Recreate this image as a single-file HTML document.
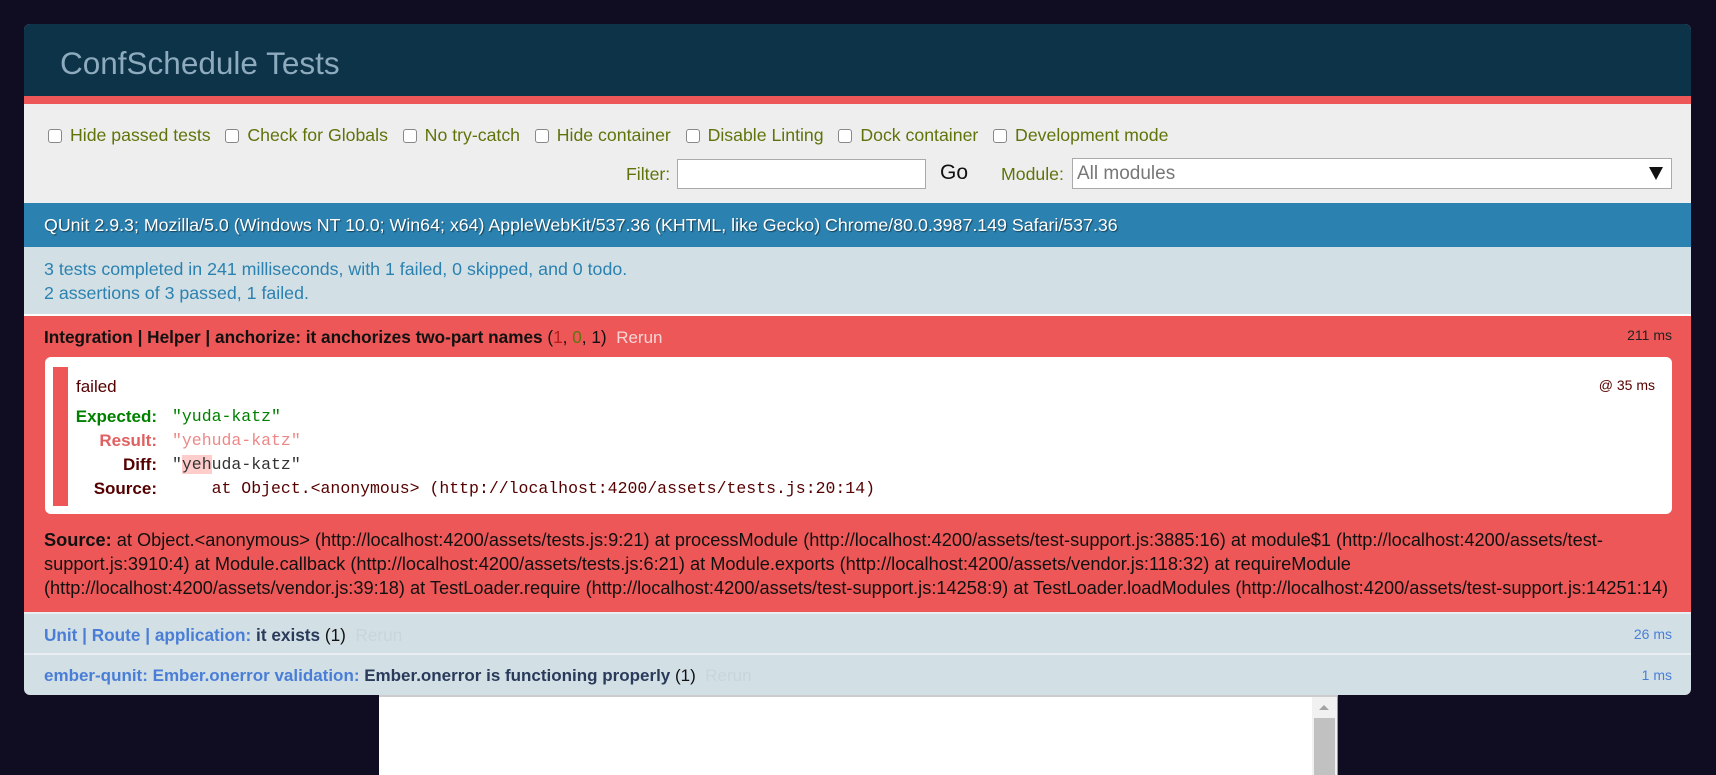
<!DOCTYPE html>
<html><head><meta charset="utf-8"><style>
*{margin:0;padding:0;box-sizing:border-box}
body{width:1716px;height:775px;background:#100d22;font-family:"Liberation Sans",sans-serif;position:relative;overflow:hidden}
.abs{position:absolute}
#panel{left:24px;top:24px;width:1667px;height:671px;background:#d2e0e6;border-radius:6px;overflow:hidden}
.cb{display:inline-block;width:14px;height:14px;border:1px solid #888;border-radius:3px;background:#fff;vertical-align:-2px;margin-right:8px}
.lbl{color:#5e740b;font-size:17.7px;white-space:nowrap}
.nw{white-space:nowrap}
</style></head><body>
<div id="panel" class="abs">
  <div class="abs" style="left:0;top:0;width:1667px;height:72px;background:#0d3349"></div>
  <div class="abs nw" style="left:36px;top:19px;font-size:31.5px;color:#8eaabd;line-height:40px">ConfSchedule Tests</div>
  <div class="abs" style="left:0;top:72px;width:1667px;height:8px;background:#ee5757"></div>
  <div class="abs" style="left:0;top:80px;width:1667px;height:99px;background:#eee"></div>
  <div class="abs lbl" style="left:24px;top:100px;line-height:22px">
    <span class="cb"></span>Hide passed tests&nbsp;&nbsp; <span class="cb"></span>Check for Globals&nbsp;&nbsp; <span class="cb"></span>No try-catch&nbsp;&nbsp; <span class="cb"></span>Hide container&nbsp;&nbsp; <span class="cb"></span>Disable Linting&nbsp;&nbsp; <span class="cb"></span>Dock container&nbsp;&nbsp; <span class="cb"></span>Development mode
  </div>
  <div class="abs lbl" style="left:602px;top:139px;line-height:22px">Filter:</div>
  <div class="abs" style="left:653px;top:135px;width:249px;height:30px;background:#fff;border:1px solid #aaa"></div>
  <div class="abs nw" style="left:916px;top:136px;font-size:21px;color:#111;line-height:26px">Go</div>
  <div class="abs lbl" style="left:977px;top:139px;line-height:22px">Module:</div>
  <div class="abs" style="left:1048px;top:134px;width:600px;height:31px;background:#fff;border:1px solid #aaa"></div>
  <div class="abs nw" style="left:1053px;top:138px;font-size:19px;color:#777;line-height:24px">All modules</div>
  <div class="abs" style="left:1625px;top:143px;width:0;height:0;border-left:7px solid transparent;border-right:7px solid transparent;border-top:13px solid #111"></div>

  <div class="abs" style="left:0;top:179px;width:1667px;height:44px;background:#2b81af"></div>
  <div class="abs nw" style="left:20px;top:190px;font-size:17.8px;color:#fff;line-height:22px;text-shadow:1px 1px 1px rgba(0,0,0,.5)">QUnit 2.9.3; Mozilla/5.0 (Windows NT 10.0; Win64; x64) AppleWebKit/537.36 (KHTML, like Gecko) Chrome/80.0.3987.149 Safari/537.36</div>
  <div class="abs nw" style="left:20px;top:233px;font-size:17.8px;color:#2b81af;line-height:24px">3 tests completed in 241 milliseconds, with 1 failed, 0 skipped, and 0 todo.<br>2 assertions of 3 passed, 1 failed.</div>
  <div class="abs" style="left:0;top:290px;width:1667px;height:2px;background:#fff"></div>

  <div class="abs" style="left:0;top:292px;width:1667px;height:296px;background:#ee5757"></div>
  <div class="abs nw" style="left:20px;top:301px;font-size:17.2px;font-weight:bold;color:#111;line-height:24px">Integration | Helper | anchorize: it anchorizes two-part names <span style="font-weight:normal">(<span style="color:#b81c1c">1</span>, <span style="color:#5e740b">0</span>, 1)</span>&nbsp; <span style="font-weight:normal;color:#f5d5d5;font-size:17px">Rerun</span></div>
  <div class="abs nw" style="left:1580px;top:302px;width:68px;text-align:right;font-size:14px;color:#222;line-height:18px">211 ms</div>
  <div class="abs" style="left:21px;top:333px;width:1627px;height:157px;background:#fff;border-radius:6px"></div>
  <div class="abs" style="left:29px;top:343px;width:15px;height:139px;background:#ee5757"></div>
  <div class="abs nw" style="left:52px;top:374px;font-size:17px;color:#500;line-height:22px;margin-top:-22px">failed</div>
  <div class="abs nw" style="left:1550px;top:352px;width:81px;text-align:right;font-size:14px;color:#500;line-height:18px">@ 35 ms</div>
  <div class="abs nw" style="left:18px;top:381px;width:115px;text-align:right;font-size:17px;font-weight:bold;line-height:24px">
    <div style="color:#008000">Expected:</div><div style="color:#e06060">Result:</div><div style="color:#500">Diff:</div><div style="color:#500">Source:</div>
  </div>
  <div class="abs nw" style="left:148px;top:381px;font-family:'Liberation Mono',monospace;font-size:16.5px;line-height:24px">
    <div style="color:#008000">"yuda-katz"</div>
    <div style="color:#e88">"yehuda-katz"</div>
    <div style="color:#333">"<span style="background:#fcc">yeh</span>uda-katz"</div>
    <div style="color:#500">&nbsp;&nbsp;&nbsp;&nbsp;at Object.&lt;anonymous&gt; (http://localhost:4200/assets/tests.js:20:14)</div>
  </div>
  <div class="abs nw" style="left:20px;top:504px;font-size:18.2px;color:#111;line-height:24px"><b>Source:</b> at Object.&lt;anonymous&gt; (http://localhost:4200/assets/tests.js:9:21) at processModule (http://localhost:4200/assets/test-support.js:3885:16) at module$1 (http://localhost:4200/assets/test-<br>support.js:3910:4) at Module.callback (http://localhost:4200/assets/tests.js:6:21) at Module.exports (http://localhost:4200/assets/vendor.js:118:32) at requireModule<br>(http://localhost:4200/assets/vendor.js:39:18) at TestLoader.require (http://localhost:4200/assets/test-support.js:14258:9) at TestLoader.loadModules (http://localhost:4200/assets/test-support.js:14251:14)</div>

  <div class="abs" style="left:0;top:588px;width:1667px;height:2px;background:#e8eef1"></div>
  <div class="abs nw" style="left:20px;top:599px;font-size:17.2px;font-weight:bold;color:#4a7ed6;line-height:24px">Unit | Route | application: <span style="color:#2a3a5a">it exists</span> <span style="color:#111;font-weight:normal">(1)</span>&nbsp; <span style="font-weight:normal;color:#c8d6dc">Rerun</span></div>
  <div class="abs nw" style="left:1580px;top:601px;width:68px;text-align:right;font-size:14px;color:#4a7ed6;line-height:18px">26 ms</div>
  <div class="abs" style="left:0;top:629px;width:1667px;height:2px;background:#e8eef1"></div>
  <div class="abs nw" style="left:20px;top:640px;font-size:17px;font-weight:bold;color:#4a7ed6;line-height:24px">ember-qunit: Ember.onerror validation: <span style="color:#2a3a5a">Ember.onerror is functioning properly</span> <span style="color:#111;font-weight:normal">(1)</span>&nbsp; <span style="font-weight:normal;color:#c8d6dc">Rerun</span></div>
  <div class="abs nw" style="left:1580px;top:642px;width:68px;text-align:right;font-size:14px;color:#4a7ed6;line-height:18px">1 ms</div>
</div>
<div class="abs" style="left:379px;top:695px;width:959px;height:80px;background:#fff;border-top:2px solid #ccc;border-right:1px solid #999"></div>
<div class="abs" style="left:1312px;top:697px;width:25px;height:78px;background:#f1f1f1"></div>
<div class="abs" style="left:1319px;top:705px;width:0;height:0;border-left:5px solid transparent;border-right:5px solid transparent;border-bottom:5px solid #a3a3a3"></div>
<div class="abs" style="left:1314px;top:718px;width:21px;height:57px;background:#c1c1c1"></div>
</body></html>
